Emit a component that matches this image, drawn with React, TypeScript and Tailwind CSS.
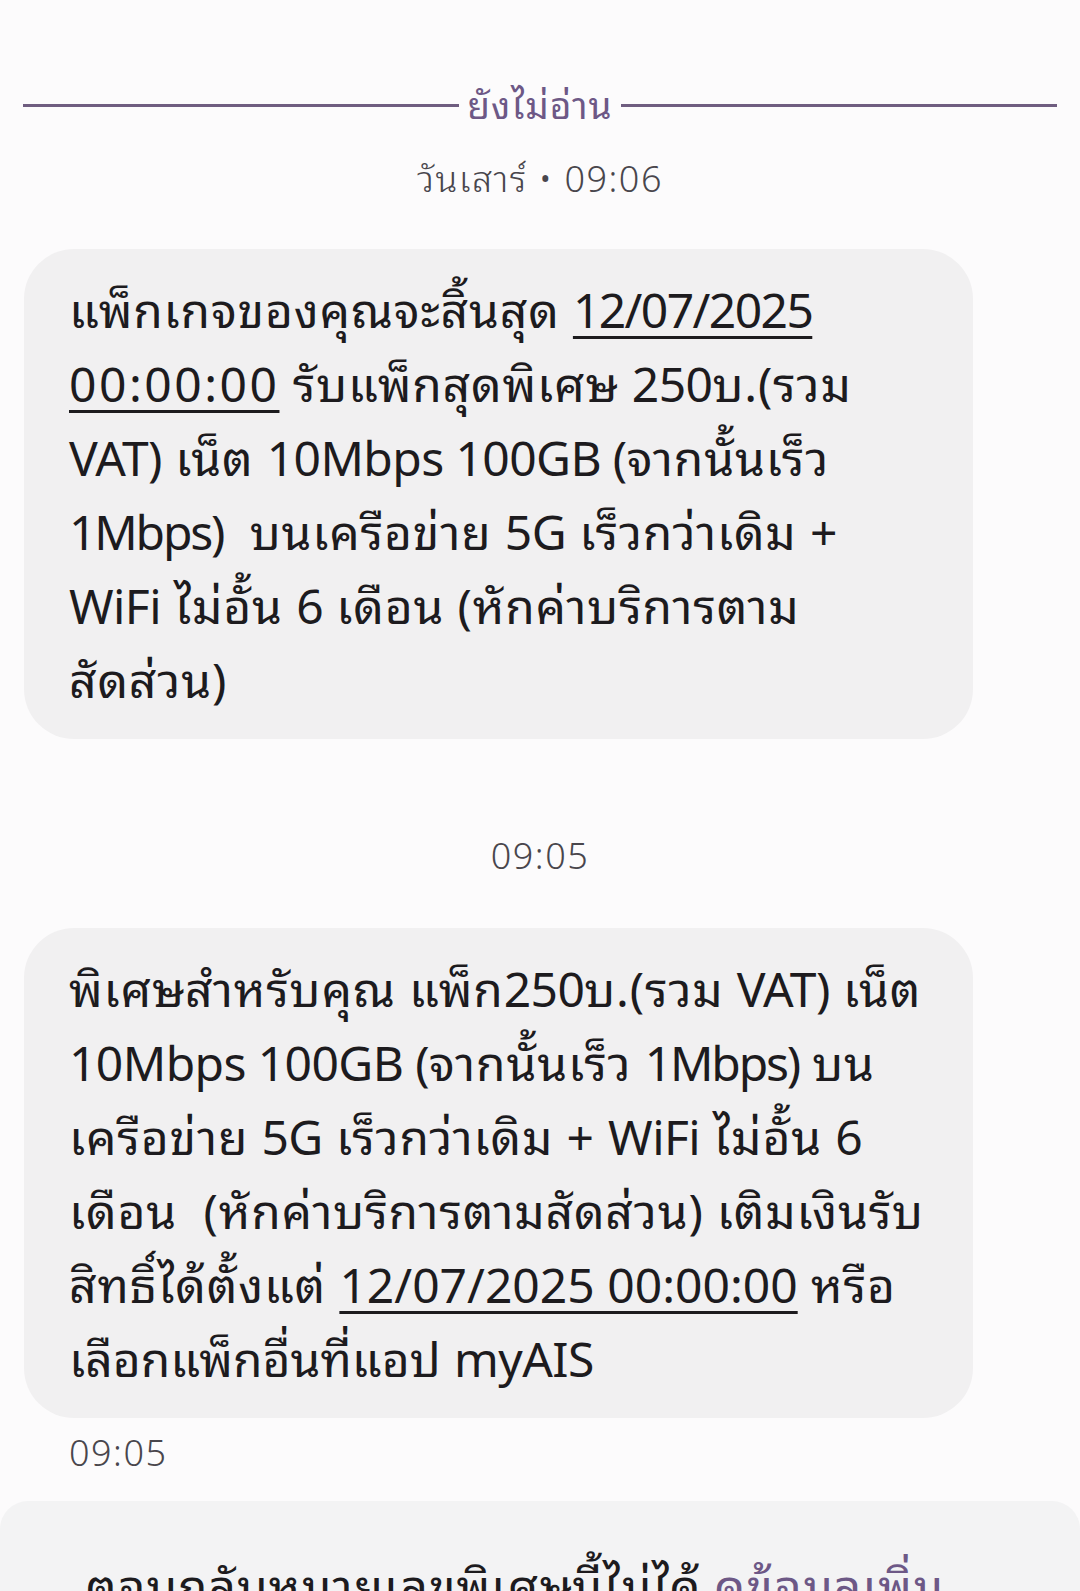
import React from "react";

const font = { fontFamily: '"Noto Sans", "Noto Sans Thai Looped", "Noto Sans Thai", Roboto, sans-serif' };

function Bubble({ children }: { children: React.ReactNode }) {
  return (
    <div className="ml-[24px] w-[949px] rounded-[50px] bg-[#f1f0f1] pl-[45px] pr-[20px] pt-[24px] pb-[22px] text-[48px] leading-[74px] tracking-[0.8px] text-[#1d1b1e] whitespace-nowrap">
      {children}
    </div>
  );
}

const U = ({ children }: { children: React.ReactNode }) => (
  <span className="underline decoration-[3px] underline-offset-[8px]">{children}</span>
);

const L = ({ children }: { children: React.ReactNode }) => (
  <span className="tracking-[-0.6px]">{children}</span>
);

const T = ({ children }: { children: React.ReactNode }) => (
  <span className="tracking-[-2.2px]">{children}</span>
);

export default function App() {
  return (
    <div className="relative h-[1591px] w-[1080px] overflow-hidden bg-[#fcfbfc]" style={font}>
      <div className="flex items-center gap-[8px] px-[23px] pt-[85px]">
        <div className="h-[3px] flex-1 bg-[#6f5d80]" />
        <div className="text-[37px] leading-[40px] tracking-[1px] text-[#6d5886]">ยังไม่อ่าน</div>
        <div className="h-[3px] flex-1 bg-[#6f5d80]" />
      </div>
      <div className="mt-[34px] text-center text-[36px] font-light leading-[40px] tracking-[1.5px] text-[#49464c]">วันเสาร์ • 09:06</div>

      <div className="mt-[50px]">
        <Bubble>
          แพ็กเกจของคุณจะสิ้นสุด <U><span className="tracking-[-1.6px]">12/07/2025</span></U>
          <br />
          <U><span className="tracking-[2.5px]">00:00:00</span></U> รับแพ็กสุดพิเศษ <L>250</L>บ.(รวม
          <br />
          <L>VAT)</L> เน็ต <L>10Mbps 100GB (</L>จากนั้นเร็ว
          <br />
          <T>1Mbps)</T>&nbsp; บนเครือข่าย <L>5G</L> เร็วกว่าเดิม +
          <br />
          <L>WiFi</L> ไม่อั้น <L>6</L> เดือน (หักค่าบริการตาม
          <br />
          สัดส่วน)
        </Bubble>
      </div>

      <div className="mt-[97px] text-center text-[36px] font-light leading-[40px] tracking-[1.5px] text-[#49464c]">09:05</div>

      <div className="mt-[52px]">
        <Bubble>
          พิเศษสำหรับคุณ แพ็ก<L>250</L>บ.(รวม <L>VAT)</L> เน็ต
          <br />
          <L>10Mbps 100GB (</L>จากนั้นเร็ว <T>1Mbps)</T> บน
          <br />
          เครือข่าย <L>5G</L> เร็วกว่าเดิม + <L>WiFi</L> ไม่อั้น <L>6</L>
          <br />
          เดือน&nbsp; (หักค่าบริการตามสัดส่วน) เติมเงินรับ
          <br />
          สิทธิ์ได้ตั้งแต่ <U><span className="tracking-[0px]">12/07/2025 00:00:00</span></U> หรือ
          <br />
          <span className="tracking-[0px]">เลือกแพ็กอื่นที่แอป</span> <L>myAIS</L>
        </Bubble>
      </div>

      <div className="mt-[15px] pl-[69px] text-[36px] font-light leading-[40px] tracking-[1.5px] text-[#49464c]">09:05</div>

      <div className="mt-[28px] h-[200px] rounded-t-[28px] bg-[#f3f3f4] pl-[86px] pt-[48px] text-[48px] leading-[74px] tracking-[0.8px] text-[#1d1b1e]">
        ตอบกลับหมายเลขพิเศษนี้ไม่ได้ <span className="text-[#6d5886]">ดูข้อมูลเพิ่ม</span>
        <br />
        <span className="text-[#6d5886]">เติม</span>
      </div>
    </div>
  );
}
